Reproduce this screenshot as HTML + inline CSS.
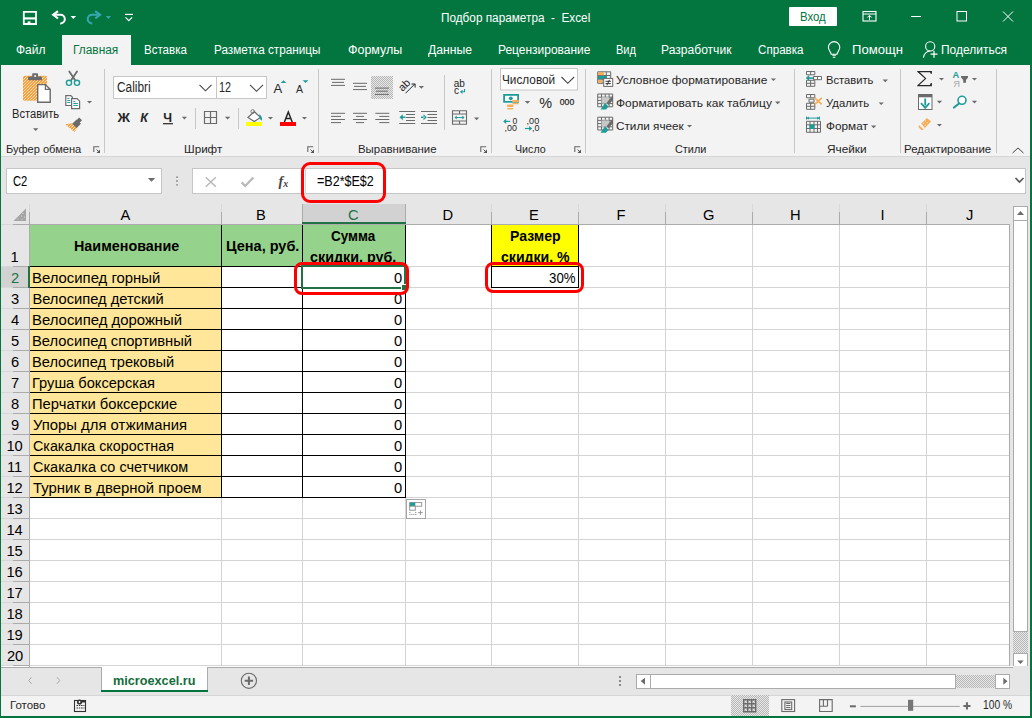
<!DOCTYPE html>
<html><head><meta charset="utf-8"><style>
html,body{margin:0;padding:0;width:1032px;height:718px;overflow:hidden;background:#fff}
body>div,body>svg{position:absolute}
.t{font-family:"Liberation Sans",sans-serif;white-space:pre;transform-origin:0 0}
</style></head><body>
<div style="left:0px;top:0px;width:1032px;height:65px;background:#03753f;"></div>
<svg style="left:0px;top:0px;" width="140" height="30" viewBox="0 0 140 30"><path d="M23.8 11.8h12.2v12.2h-12.2z" fill="none" stroke="#fff" stroke-width="1.8"/><path d="M24 18.4h12" stroke="#fff" stroke-width="2.2"/><rect x="27.6" y="21.4" width="2.9" height="2.5" fill="#fff"/><path d="M53 14.8h7.2a4.3 4.3 0 0 1 0.6 8.6h-0.6" fill="none" stroke="#fff" stroke-width="2"/><path d="M58 11.2l-4.8 3.6 4.8 3.7" fill="none" stroke="#fff" stroke-width="2.2"/><polygon points="70.6,16 76.1,16 73.35,18.9" fill="#fff"/><path d="M99.5 14.8h-7.2a4.3 4.3 0 0 0 -0.6 8.6h0.6" fill="none" stroke="#38a6ae" stroke-width="2"/><path d="M95.2 11.2l4.8 3.6-4.8 3.7" fill="none" stroke="#38a6ae" stroke-width="2.2"/><polygon points="105.8,16 111,16 108.4,19" fill="#38a6ae"/><path d="M125 14.4h8" stroke="#fff" stroke-width="1.2"/><path d="M125.5 17.3l3.3 3.4 3.3-3.4" fill="none" stroke="#fff" stroke-width="1.2"/></svg>
<div class="t" style="left:440.96px;top:12px;font-size:12.5px;line-height:12.5px;color:#fff;transform:scaleX(0.9418);">Подбор параметра  -  Excel</div>
<div style="left:789px;top:7px;width:48px;height:19px;background:#fff;border-radius:1px"></div>
<div class="t" style="left:799.59px;top:11px;font-size:12.5px;line-height:12.5px;color:#03753f;transform:scaleX(0.9112);">Вход</div>
<svg style="left:855px;top:5px;" width="170" height="24" viewBox="0 0 170 24"><rect x="8" y="6.5" width="13" height="9.5" fill="none" stroke="#fff" stroke-width="1.1"/><path d="M8 9h13" stroke="#fff" stroke-width="1"/><path d="M14.5 15v-4.5M12.3 12.5l2.2-2.2 2.2 2.2" fill="none" stroke="#fff" stroke-width="1"/><path d="M56 11.5h10" stroke="#fff" stroke-width="1"/><rect x="102" y="6.5" width="9.5" height="9.5" fill="none" stroke="#fff" stroke-width="1"/><path d="M148 6.5l10 10M158 6.5l-10 10" stroke="#fff" stroke-width="1"/></svg>
<div style="left:62px;top:35px;width:69px;height:30px;background:#f3f3f3;"></div>
<svg style="left:820px;top:38px;" width="130" height="24" viewBox="0 0 130 24"><path d="M11.2 16.3c0-2.2-2.8-3.6-2.8-7a5.7 5.7 0 0 1 11.4 0c0 3.4-2.8 4.8-2.8 7z" fill="none" stroke="#fff" stroke-width="1.1"/><path d="M12.3 17.3h3.6M12.8 19.3h2.6" stroke="#fff" stroke-width="1.1"/><circle cx="110.2" cy="8.4" r="4.6" fill="none" stroke="#fff" stroke-width="1.1"/><path d="M103.4 19.6c0.8-3.8 3.4-6.4 6.8-6.6" fill="none" stroke="#fff" stroke-width="1.1"/><path d="M114 12.7v7M110.5 16.2h7" stroke="#fff" stroke-width="1.2"/></svg>
<div class="t" style="left:15.80px;top:44px;font-size:12.5px;line-height:12.5px;color:#fff;transform:scaleX(0.9593);">Файл</div>
<div class="t" style="left:73.05px;top:44px;font-size:12.5px;line-height:12.5px;color:#03753f;transform:scaleX(0.9518);">Главная</div>
<div class="t" style="left:144.08px;top:44px;font-size:12.5px;line-height:12.5px;color:#fff;transform:scaleX(0.9229);">Вставка</div>
<div class="t" style="left:213.76px;top:44px;font-size:12.5px;line-height:12.5px;color:#fff;transform:scaleX(0.9385);">Разметка страницы</div>
<div class="t" style="left:347.60px;top:44px;font-size:12.5px;line-height:12.5px;color:#fff;transform:scaleX(0.9980);">Формулы</div>
<div class="t" style="left:428.30px;top:44px;font-size:12.5px;line-height:12.5px;color:#fff;transform:scaleX(0.9755);">Данные</div>
<div class="t" style="left:497.94px;top:44px;font-size:12.5px;line-height:12.5px;color:#fff;transform:scaleX(0.9574);">Рецензирование</div>
<div class="t" style="left:615.62px;top:44px;font-size:12.5px;line-height:12.5px;color:#fff;transform:scaleX(0.8826);">Вид</div>
<div class="t" style="left:661.03px;top:44px;font-size:12.5px;line-height:12.5px;color:#fff;transform:scaleX(0.9665);">Разработчик</div>
<div class="t" style="left:758.00px;top:44px;font-size:12.5px;line-height:12.5px;color:#fff;transform:scaleX(0.9290);">Справка</div>
<div class="t" style="left:852.45px;top:44px;font-size:12.5px;line-height:12.5px;color:#fff;transform:scaleX(1.0468);">Помощн</div>
<div class="t" style="left:941.04px;top:44px;font-size:12.5px;line-height:12.5px;color:#fff;transform:scaleX(0.9575);">Поделиться</div>
<div style="left:1px;top:65px;width:1030px;height:92px;background:#f3f3f3;"></div>
<div style="left:1px;top:156px;width:1030px;height:1px;background:#d6d6d6;"></div>
<div style="left:104px;top:69px;width:1px;height:84px;background:#c8c8c8;"></div>
<div style="left:318px;top:69px;width:1px;height:84px;background:#c8c8c8;"></div>
<div style="left:491px;top:69px;width:1px;height:84px;background:#c8c8c8;"></div>
<div style="left:585px;top:69px;width:1px;height:84px;background:#c8c8c8;"></div>
<div style="left:794px;top:69px;width:1px;height:84px;background:#c8c8c8;"></div>
<div style="left:900px;top:69px;width:1px;height:84px;background:#c8c8c8;"></div>
<div style="left:996px;top:69px;width:1px;height:84px;background:#c8c8c8;"></div>
<div class="t" style="left:6.40px;top:144px;font-size:11.5px;line-height:11.5px;color:#262626;transform:scaleX(0.9626);">Буфер обмена</div>
<div class="t" style="left:184.20px;top:144px;font-size:11.5px;line-height:11.5px;color:#262626;transform:scaleX(1.0112);">Шрифт</div>
<div class="t" style="left:357.50px;top:144px;font-size:11.5px;line-height:11.5px;color:#262626;transform:scaleX(0.9916);">Выравнивание</div>
<div class="t" style="left:514.70px;top:144px;font-size:11.5px;line-height:11.5px;color:#262626;transform:scaleX(0.9272);">Число</div>
<div class="t" style="left:674.50px;top:144px;font-size:11.5px;line-height:11.5px;color:#262626;transform:scaleX(0.9448);">Стили</div>
<div class="t" style="left:827.00px;top:144px;font-size:11.5px;line-height:11.5px;color:#262626;transform:scaleX(1.0276);">Ячейки</div>
<div class="t" style="left:904.40px;top:144px;font-size:11.5px;line-height:11.5px;color:#262626;transform:scaleX(0.9953);">Редактирование</div>
<svg style="left:0;top:0" width="1032" height="160" viewBox="0 0 1032 160"><defs><pattern id="dith" width="3" height="3" patternUnits="userSpaceOnUse"><rect width="3" height="3" fill="#f5a043"/><rect x="0" y="0" width="1" height="1" fill="#fde3b5"/><rect x="2" y="1" width="1" height="1" fill="#fbd08e"/><rect x="1" y="2" width="1" height="1" fill="#fde3b5"/></pattern><pattern id="hatch" width="2" height="2" patternUnits="userSpaceOnUse"><rect width="2" height="2" fill="#e8e8e8"/><rect width="1" height="1" fill="#b6b6b6"/><rect x="1" y="1" width="1" height="1" fill="#b6b6b6"/></pattern></defs><rect x="23" y="75.8" width="24" height="25" rx="1.5" fill="url(#dith)"/><rect x="28" y="76.4" width="14" height="3.8" rx="0.8" fill="#6b6b6b"/><rect x="32.2" y="73.2" width="5.8" height="4" rx="0.8" fill="#6b6b6b"/><circle cx="35.1" cy="76" r="1" fill="#fff"/><path d="M37.7 84.6h7.7l4.8 4.8v12.8h-12.5z" fill="#fff" stroke="#6b6b6b" stroke-width="1.4"/><path d="M45.4 84.6v4.8h4.8" fill="none" stroke="#6b6b6b" stroke-width="1.2"/><polygon points="33,128.3 38.4,128.3 35.7,131.0" fill="#6b6b6b"/><path d="M69.3 71.5l5.7 8.5M77 71.5l-5.7 8.5" stroke="#6b6b6b" stroke-width="1.8" stroke-linecap="round"/><circle cx="69" cy="82.8" r="2.6" fill="none" stroke="#1f9b98" stroke-width="1.4"/><circle cx="77" cy="82.8" r="2.6" fill="none" stroke="#1f9b98" stroke-width="1.4"/><path d="M65.8 95.6h5l1.6 1.6v8.3h-6.6z" fill="#fff" stroke="#6b6b6b" stroke-width="1.2"/><path d="M67.3 98.4h2.2M67.3 100.5h3M67.3 102.5h3" stroke="#1f9b98" stroke-width="1"/><path d="M71.6 98.6h5.4l2.6 2.6v7.4h-8z" fill="#fff" stroke="#6b6b6b" stroke-width="1.2"/><path d="M73.3 101.6h2M73.3 103.5h4.6M73.3 105.4h4.6" stroke="#1f9b98" stroke-width="1"/><polygon points="87,101 92,101 89.5,103.5" fill="#6b6b6b"/><path d="M79.2 117.5l2.8 2.8-3.2 3.2-2.8-2.8z" fill="#6b6b6b"/><path d="M76.6 119.5l4.3 4.3-4.6 4.6-4.3-4.3z" fill="#6b6b6b"/><path d="M71.6 123.2l5.4 5.4-2.6 3.3-9.2-7.6z" fill="url(#dith)"/><rect x="113.5" y="76.5" width="103" height="22" fill="#fff" stroke="#c6c6c6"/><rect x="216.5" y="76.5" width="50" height="22" fill="#fff" stroke="#c6c6c6"/><path d="M199.5 84.8l6 6 6-6M250 84.8l6.5 6.5 6.5-6.5" fill="none" stroke="#444" stroke-width="1.1"/><text x="273.5" y="92.8" font-family="Liberation Sans" font-size="13" fill="#262626">A</text><polygon points="280.7,83 286.3,83 283.5,80.2" fill="#1f9b98"/><text x="296" y="92.8" font-family="Liberation Sans" font-size="10.5" fill="#262626">A</text><polygon points="302.7,80.2 308.4,80.2 305.5,83" fill="#1f9b98"/><text x="117.5" y="122" font-family="Liberation Sans" font-weight="bold" font-size="12.5" fill="#262626" textLength="12.5" lengthAdjust="spacingAndGlyphs">Ж</text><text x="140.3" y="122" font-family="Liberation Sans" font-weight="bold" font-style="italic" font-size="12.5" fill="#262626">К</text><text x="163.3" y="122" font-family="Liberation Sans" font-weight="bold" font-size="12.5" fill="#262626">Ч</text><rect x="163" y="123.1" width="10" height="1.2" fill="#262626"/><polygon points="181.8,116.8 187,116.8 184.4,119.39999999999999" fill="#6b6b6b"/><rect x="195" y="108" width="1" height="21" fill="#c8c8c8"/><rect x="238" y="108" width="1" height="21" fill="#c8c8c8"/><path d="M204.5 111.5h12v12h-12zM210.5 111.5v12M204.5 117.5h12" fill="none" stroke="#6b6b6b" stroke-width="1.2"/><polygon points="224.9,116.8 230.3,116.8 227.60000000000002,119.5" fill="#6b6b6b"/><path d="M248 117.4l6.3-5.7 6.1 5.7-6.1 4.1z" fill="#fff" stroke="#6b6b6b" stroke-width="1.25"/><circle cx="252.7" cy="111.5" r="1.8" fill="none" stroke="#6b6b6b" stroke-width="0.9"/><path d="M259 114.2q3.5 1.5 3 6.5l-2-1.5z" fill="#1f9b98"/><rect x="246" y="122" width="16" height="4" fill="#ffff00"/><polygon points="267.9,117 273,117 270.45,119.55000000000001" fill="#6b6b6b"/><path d="M284.4 122l3.9-10 3.9 10M285.8 118.6h5" fill="none" stroke="#262626" stroke-width="1.5"/><rect x="280" y="122" width="16" height="4" fill="#ff0000"/><polygon points="301.9,117 307,117 304.45,119.55000000000001" fill="#6b6b6b"/><path d="M331 79.3h14M332 82.4h12M331 85.4h14" stroke="#6b6b6b" stroke-width="1"/><path d="M353 83.3h14M354 86.4h12M353 89.6h14" stroke="#6b6b6b" stroke-width="1"/><rect x="371" y="76" width="22" height="23" fill="url(#hatch)"/><path d="M375 88.1h14M376 91.2h12M375 94.4h14" stroke="#6b6b6b" stroke-width="1"/><text x="0" y="0" font-family="Liberation Sans" font-size="11" fill="#262626" transform="translate(402.5,92) rotate(-45)">ab</text><path d="M405.6 93.2l9.3-9.3M411.5 84h3.6v3.6" fill="none" stroke="#262626" stroke-width="1"/><polygon points="418.7,86 424,86 421.35,88.65" fill="#6b6b6b"/><path d="M331 113.3h14M331 116.4h10M331 119.5h14M331 122.6h10" stroke="#6b6b6b" stroke-width="1"/><path d="M353 113.3h14M356 116.4h8M353 119.5h14M356 122.6h8" stroke="#6b6b6b" stroke-width="1"/><path d="M375.3 113.3h14M379.3 116.4h10M375.3 119.5h14M379.3 122.6h10" stroke="#6b6b6b" stroke-width="1"/><path d="M399.2 111.5h16M406 114.5h9M406 117.5h9M406 120.5h9M399.2 123.5h16" stroke="#6b6b6b" stroke-width="1"/><path d="M399.5 117.3l3.3-3v6zM402 116.6h3.5v1.5h-3.5z" fill="#1f9b98"/><path d="M421 111.5h16M427.5 114.5h9.5M427.5 117.5h9.5M427.5 120.5h9.5M421 123.5h16" stroke="#6b6b6b" stroke-width="1"/><path d="M426.8 117.3l-3.3-3v6zM421 116.6h3.5v1.5h-3.5z" fill="#1f9b98"/><rect x="444" y="75" width="1" height="55" fill="#c8c8c8"/><text x="453.8" y="86.6" font-family="Liberation Sans" font-size="10" fill="#262626">ab</text><text x="454" y="94" font-family="Liberation Sans" font-size="10" fill="#262626">c</text><path d="M464.5 89v2.8h-3M462.5 90.3l-1.7 1.5 1.7 1.5" fill="none" stroke="#1f9b98" stroke-width="1.1"/><path d="M452.5 110.7h14v13.6h-14zM452.5 114h14M452.5 121h14M459.5 110.7v3.3M459.5 121v3.3" fill="none" stroke="#6b6b6b" stroke-width="1.1"/><path d="M455 117.6h9" stroke="#1f9b98" stroke-width="1"/><path d="M454.5 117.6l2.2-2v4zM464.5 117.6l-2.2-2v4z" fill="#1f9b98"/><polygon points="474,117.6 479.2,117.6 476.6,120.19999999999999" fill="#6b6b6b"/><rect x="500.5" y="68.5" width="77" height="21.5" fill="#fff" stroke="#c6c6c6"/><path d="M561.5 77l6.3 6.3 6.3-6.3" fill="none" stroke="#444" stroke-width="1.1"/><rect x="503.2" y="94" width="15.8" height="8.7" fill="#1f9b98"/><rect x="505" y="95.8" width="12.2" height="5.1" fill="#fff"/><circle cx="510.8" cy="98.3" r="1.9" fill="#1f9b98"/><rect x="512" y="100" width="7" height="2.2" rx="1" fill="#f6ae5a"/><rect x="512.5" y="103" width="6" height="1.2" fill="#f6ae5a"/><rect x="507" y="104.5" width="6.5" height="2.4" rx="1" fill="#f6ae5a"/><rect x="507.2" y="108" width="6" height="1.4" fill="#f6ae5a"/><polygon points="524.8,101 530.2,101 527.5,103.70000000000005" fill="#6b6b6b"/><text x="539.2" y="107.9" font-family="Liberation Sans" font-size="14.5" fill="#262626" textLength="12.8" lengthAdjust="spacingAndGlyphs">%</text><text x="559.8" y="105" font-family="Liberation Sans" font-size="9.8" fill="#262626" textLength="14.4" lengthAdjust="spacingAndGlyphs" stroke="#262626" stroke-width="0.25">000</text><path d="M504 121.4h6" stroke="#1f9b98" stroke-width="1.2"/><path d="M503.2 121.4l3-2.6v5.2z" fill="#1f9b98"/><text x="512.4" y="123.5" font-family="Liberation Sans" font-size="8.6" fill="#262626">0</text><text x="504.6" y="130.9" font-family="Liberation Sans" font-size="8.6" fill="#262626" textLength="12.4" lengthAdjust="spacingAndGlyphs">,00</text><text x="526.6" y="123.5" font-family="Liberation Sans" font-size="8.6" fill="#262626" textLength="12.6" lengthAdjust="spacingAndGlyphs">,00</text><text x="532" y="130.9" font-family="Liberation Sans" font-size="8.6" fill="#262626" textLength="7.4" lengthAdjust="spacingAndGlyphs">,0</text><path d="M525 128.5h6" stroke="#1f9b98" stroke-width="1.2"/><path d="M532.2 128.5l-3-2.6v5.2z" fill="#1f9b98"/><path d="M597.7 71.8h13v11.5h-13zM597.7 75.5h13M597.7 79.3h13M602 71.8v11.5M606.3 71.8v11.5" fill="none" stroke="#6b6b6b" stroke-width="1"/><rect x="598" y="72.2" width="6" height="3" fill="#f6ae5a"/><rect x="598" y="76" width="9" height="3" fill="#1f9b98"/><rect x="598" y="79.8" width="4" height="3" fill="#f6ae5a"/><rect x="603.7" y="78.4" width="9" height="8" fill="#fff" stroke="#6b6b6b" stroke-width="1"/><path d="M605.5 81.3h5.4M605.5 83.6h5.4M609.5 79.8l-2.6 5.5" stroke="#262626" stroke-width="0.9"/><path d="M597.7 94h15v12.8h-15zM597.7 97.2h15M597.7 100.4h15M597.7 103.6h15M601.5 94v12.8M605.3 94v12.8M609.1 94v12.8" fill="none" stroke="#6b6b6b" stroke-width="1"/><rect x="601.5" y="97.2" width="7.6" height="6.4" fill="#c8c8c8"/><path d="M613 95l-6.5 8 2 2 4.5-5z" fill="#6b6b6b"/><path d="M605 103l3.5 3.5-2.5 3h-5.5z" fill="#1f9b98"/><path d="M597.7 117.2h15v12.8h-15zM597.7 120.4h15M597.7 123.60000000000001h15M597.7 126.8h15M601.5 117.2v12.8M605.3 117.2v12.8M609.1 117.2v12.8" fill="none" stroke="#6b6b6b" stroke-width="1"/><rect x="601.5" y="120.4" width="7.6" height="6.4" fill="#c8c8c8"/><path d="M613 118.2l-6.5 8 2 2 4.5-5z" fill="#6b6b6b"/><path d="M605 126.2l3.5 3.5-2.5 3h-5.5z" fill="#1f9b98"/><polygon points="770.8,78.5 776,78.5 773.4,81.10000000000002" fill="#6b6b6b"/><polygon points="775,101.5 780.4,101.5 777.7,104.19999999999999" fill="#6b6b6b"/><polygon points="687,125 692,125 689.5,127.5" fill="#6b6b6b"/><path d="M806.5 71.5h8.3v3.3h-8.3zM810.6 71.5v3.3M806.5 80.3h8.3v6h-8.3zM806.5 83.3h8.3M810.6 80.3v6" fill="none" stroke="#6b6b6b" stroke-width="1"/><path d="M813.5 76.5h8v3.2h-8zM817.5 76.5v3.2" fill="#fff" stroke="#6b6b6b" stroke-width="1"/><path d="M807.5 78.1h5.5" stroke="#1f9b98" stroke-width="1.6"/><path d="M805.8 78.1l3.4-3v6z" fill="#1f9b98"/><path d="M806.5 94.5h8.3v3.3h-8.3zM810.6 94.5v3.3M806.5 103.3h8.3v6h-8.3zM806.5 106.3h8.3M810.6 103.3v6M809 99.2h5v3h-5z" fill="none" stroke="#6b6b6b" stroke-width="1"/><path d="M814.7 97.8l7 6.6M821.7 97.8l-7 6.6" stroke="#f6ae5a" stroke-width="1.8"/><path d="M806.5 118.1h13M806.5 116.6v3M819.5 116.6v3" stroke="#1f9b98" stroke-width="1"/><path d="M806.8 118.1l2-1.6v3.2zM819.2 118.1l-2-1.6v3.2z" fill="#1f9b98"/><path d="M806.5 121.3h14v11h-14zM806.5 124.8h14M806.5 128.5h14M810 121.3v11M814 121.3v11M817.5 121.3v11" fill="none" stroke="#6b6b6b" stroke-width="1"/><rect x="809.5" y="124.5" width="5" height="4.5" fill="#1f9b98"/><polygon points="882.6,79.5 888,79.5 885.3,82.19999999999999" fill="#6b6b6b"/><polygon points="878.6,102.5 883.8,102.5 881.2,105.09999999999997" fill="#6b6b6b"/><polygon points="871,125.5 876.3,125.5 873.65,128.14999999999998" fill="#6b6b6b"/><path d="M917.2 71h14.7v2.8h-1.2l-0.6-1.5h-10.3l6.6 6.2-7 6.4h10.6l0.7-1.9h1.2v3.3h-14.7v-0.9l7.6-6.9-7.6-6.7z" fill="#262626"/><polygon points="939,77.9 944,77.9 941.5,80.4" fill="#6b6b6b"/><text x="952.6" y="77.9" font-family="Liberation Sans" font-weight="bold" font-size="9.3" fill="#1f9b98">A</text><text x="953.3" y="86.8" font-family="Liberation Sans" font-size="9.3" fill="#a8a8a8">Я</text><path d="M961.1 76h6.9v1.6l-2 2.4v2.8h-2.8v-2.8l-2.1-2.4z" fill="#6b6b6b"/><polygon points="971.9,77.9 977,77.9 974.45,80.45000000000002" fill="#6b6b6b"/><rect x="918.5" y="94.5" width="13.5" height="15" fill="#fff" stroke="#6b6b6b" stroke-width="1"/><rect x="918.5" y="94.5" width="13.5" height="2.8" fill="#6b6b6b"/><path d="M925.2 98.5v7" stroke="#1f9b98" stroke-width="1.8"/><path d="M921 103.2l4.2 4.6 4.2-4.6" fill="none" stroke="#1f9b98" stroke-width="1.8"/><polygon points="936.9,100.8 942.1,100.8 939.5,103.40000000000002" fill="#6b6b6b"/><circle cx="962" cy="100.3" r="4" fill="#fff" stroke="#1f9b98" stroke-width="1.6"/><path d="M959 103.5l-5 4" stroke="#1f9b98" stroke-width="2.2" stroke-linecap="round"/><polygon points="971.9,100.8 977.1,100.8 974.5,103.40000000000002" fill="#6b6b6b"/><path d="M921.2 123.5l5.8-5.6 4 3.5-6.1 6.5z" fill="#f6ae5a"/><path d="M919 125.1l4.9 4.7-2.5 0.3-2.9-2.8z" fill="#f6ae5a"/><circle cx="925.5" cy="121" r="0.6" fill="#fde7c0"/><circle cx="923.6" cy="123.3" r="0.6" fill="#fde7c0"/><circle cx="927.3" cy="122.8" r="0.6" fill="#fde7c0"/><circle cx="925.4" cy="125" r="0.6" fill="#fde7c0"/><polygon points="936.9,124 942,124 939.45,126.55000000000001" fill="#6b6b6b"/><path d="M93.8 152v-5.2h5.4" fill="none" stroke="#666" stroke-width="1.1"/><path d="M96.5 149.5l3 3" stroke="#555" stroke-width="1"/><path d="M96.5 153h3.5v-3.5z" fill="#555"/><path d="M307.8 152v-5.2h5.4" fill="none" stroke="#666" stroke-width="1.1"/><path d="M310.5 149.5l3 3" stroke="#555" stroke-width="1"/><path d="M310.5 153h3.5v-3.5z" fill="#555"/><path d="M480.8 152v-5.2h5.4" fill="none" stroke="#666" stroke-width="1.1"/><path d="M483.5 149.5l3 3" stroke="#555" stroke-width="1"/><path d="M483.5 153h3.5v-3.5z" fill="#555"/><path d="M574.8 152v-5.2h5.4" fill="none" stroke="#666" stroke-width="1.1"/><path d="M577.5 149.5l3 3" stroke="#555" stroke-width="1"/><path d="M577.5 153h3.5v-3.5z" fill="#555"/><path d="M1012.5 153l5.5-5 5.5 5" fill="none" stroke="#444" stroke-width="1"/></svg>
<div class="t" style="left:11.80px;top:107.6px;font-size:12px;line-height:12px;color:#262626;transform:scaleX(0.9266);">Вставить</div>
<div class="t" style="left:116.50px;top:80px;font-size:14px;line-height:14px;color:#262626;transform:scaleX(0.8467);">Calibri</div>
<div class="t" style="left:218.83px;top:80.2px;font-size:14px;line-height:14px;color:#262626;transform:scaleX(0.7710);">12</div>
<div class="t" style="left:502.09px;top:73px;font-size:13px;line-height:13px;color:#262626;transform:scaleX(0.9063);">Числовой</div>
<div class="t" style="left:616.20px;top:75.3px;font-size:11.8px;line-height:11.8px;color:#262626;transform:scaleX(1.0085);">Условное форматирование</div>
<div class="t" style="left:616.00px;top:98px;font-size:11.8px;line-height:11.8px;color:#262626;transform:scaleX(1.0157);">Форматировать как таблицу</div>
<div class="t" style="left:616.00px;top:121px;font-size:11.8px;line-height:11.8px;color:#262626;transform:scaleX(0.9939);">Стили ячеек</div>
<div class="t" style="left:825.60px;top:75px;font-size:11.8px;line-height:11.8px;color:#262626;transform:scaleX(0.9467);">Вставить</div>
<div class="t" style="left:825.60px;top:98px;font-size:11.8px;line-height:11.8px;color:#262626;transform:scaleX(0.9578);">Удалить</div>
<div class="t" style="left:825.60px;top:121px;font-size:11.8px;line-height:11.8px;color:#262626;transform:scaleX(0.9976);">Формат</div>
<div style="left:1px;top:157px;width:1030px;height:47px;background:#e6e6e6;"></div>
<div style="left:6px;top:168px;width:156px;height:26px;background:#fff;border:1px solid #c6c6c6;box-sizing:border-box;"></div>
<div class="t" style="left:13.40px;top:174px;font-size:14px;line-height:14px;color:#000;transform:scaleX(0.8006);">C2</div>
<div style="left:192px;top:168px;width:834px;height:26px;background:#fff;border:1px solid #c6c6c6;box-sizing:border-box;"></div>
<div class="t" style="left:317.00px;top:174px;font-size:14px;line-height:14px;color:#000;transform:scaleX(0.8954);">=B2*$E$2</div>
<svg style="left:140px;top:160px;" width="900" height="40" viewBox="0 0 900 40"><polygon points="7.9,17.9 15.2,17.9 11.55,21.7" fill="#6b6b6b"/><circle cx="37" cy="17.2" r="0.9" fill="#8a8a8a"/><circle cx="37" cy="21" r="0.9" fill="#8a8a8a"/><circle cx="37" cy="24.8" r="0.9" fill="#8a8a8a"/><path d="M65.8 17.3l10 9.4M75.8 17.3l-10 9.4" stroke="#b8b8b8" stroke-width="1.5"/><path d="M101.6 22.4l3.6 3.6 8.2-8.6" fill="none" stroke="#b8b8b8" stroke-width="2.2"/><text x="138.5" y="26.3" font-family="Liberation Serif" font-style="italic" font-weight="bold" font-size="14" fill="#444">f</text><text x="143.2" y="26.5" font-family="Liberation Serif" font-style="italic" font-weight="bold" font-size="10" fill="#444">x</text><path d="M875.5 18l4 4 4-4" fill="none" stroke="#555" stroke-width="1.6"/></svg>
<div style="left:1px;top:204px;width:1012px;height:20px;background:#e6e6e6;"></div>
<div style="left:1px;top:224px;width:1012px;height:1px;background:#ababab;"></div>
<div style="left:1px;top:225px;width:1012px;height:441px;background:#fff;"></div>
<div style="left:1px;top:204px;width:28px;height:462px;background:#e6e6e6;"></div>
<div style="left:29px;top:204px;width:1px;height:8px;background:#d8d8d8;"></div>
<div style="left:29px;top:212px;width:1px;height:454px;background:#ababab;"></div>
<div style="left:1px;top:224px;width:12px;height:1px;background:#d8d8d8;"></div>
<div style="left:13px;top:224px;width:16px;height:1px;background:#ababab;"></div>
<div style="left:30px;top:266px;width:980px;height:1px;background:#d4d4d4;"></div>
<div style="left:30px;top:287px;width:980px;height:1px;background:#d4d4d4;"></div>
<div style="left:30px;top:308px;width:980px;height:1px;background:#d4d4d4;"></div>
<div style="left:30px;top:329px;width:980px;height:1px;background:#d4d4d4;"></div>
<div style="left:30px;top:350px;width:980px;height:1px;background:#d4d4d4;"></div>
<div style="left:30px;top:371px;width:980px;height:1px;background:#d4d4d4;"></div>
<div style="left:30px;top:392px;width:980px;height:1px;background:#d4d4d4;"></div>
<div style="left:30px;top:413px;width:980px;height:1px;background:#d4d4d4;"></div>
<div style="left:30px;top:434px;width:980px;height:1px;background:#d4d4d4;"></div>
<div style="left:30px;top:455px;width:980px;height:1px;background:#d4d4d4;"></div>
<div style="left:30px;top:476px;width:980px;height:1px;background:#d4d4d4;"></div>
<div style="left:30px;top:497px;width:980px;height:1px;background:#d4d4d4;"></div>
<div style="left:30px;top:518px;width:980px;height:1px;background:#d4d4d4;"></div>
<div style="left:30px;top:539px;width:980px;height:1px;background:#d4d4d4;"></div>
<div style="left:30px;top:560px;width:980px;height:1px;background:#d4d4d4;"></div>
<div style="left:30px;top:581px;width:980px;height:1px;background:#d4d4d4;"></div>
<div style="left:30px;top:602px;width:980px;height:1px;background:#d4d4d4;"></div>
<div style="left:30px;top:623px;width:980px;height:1px;background:#d4d4d4;"></div>
<div style="left:30px;top:644px;width:980px;height:1px;background:#d4d4d4;"></div>
<div style="left:30px;top:665px;width:980px;height:1px;background:#d4d4d4;"></div>
<div style="left:221px;top:225px;width:1px;height:441px;background:#d4d4d4;"></div>
<div style="left:302px;top:225px;width:1px;height:441px;background:#d4d4d4;"></div>
<div style="left:405px;top:225px;width:1px;height:441px;background:#d4d4d4;"></div>
<div style="left:491px;top:225px;width:1px;height:441px;background:#d4d4d4;"></div>
<div style="left:578px;top:225px;width:1px;height:441px;background:#d4d4d4;"></div>
<div style="left:665px;top:225px;width:1px;height:441px;background:#d4d4d4;"></div>
<div style="left:752px;top:225px;width:1px;height:441px;background:#d4d4d4;"></div>
<div style="left:839px;top:225px;width:1px;height:441px;background:#d4d4d4;"></div>
<div style="left:926px;top:225px;width:1px;height:441px;background:#d4d4d4;"></div>
<div style="left:221px;top:204px;width:1px;height:8px;background:#d8d8d8;"></div>
<div style="left:221px;top:212px;width:1px;height:12px;background:#ababab;"></div>
<div style="left:302px;top:204px;width:1px;height:8px;background:#d8d8d8;"></div>
<div style="left:302px;top:212px;width:1px;height:12px;background:#ababab;"></div>
<div style="left:405px;top:204px;width:1px;height:8px;background:#d8d8d8;"></div>
<div style="left:405px;top:212px;width:1px;height:12px;background:#ababab;"></div>
<div style="left:491px;top:204px;width:1px;height:8px;background:#d8d8d8;"></div>
<div style="left:491px;top:212px;width:1px;height:12px;background:#ababab;"></div>
<div style="left:578px;top:204px;width:1px;height:8px;background:#d8d8d8;"></div>
<div style="left:578px;top:212px;width:1px;height:12px;background:#ababab;"></div>
<div style="left:665px;top:204px;width:1px;height:8px;background:#d8d8d8;"></div>
<div style="left:665px;top:212px;width:1px;height:12px;background:#ababab;"></div>
<div style="left:752px;top:204px;width:1px;height:8px;background:#d8d8d8;"></div>
<div style="left:752px;top:212px;width:1px;height:12px;background:#ababab;"></div>
<div style="left:839px;top:204px;width:1px;height:8px;background:#d8d8d8;"></div>
<div style="left:839px;top:212px;width:1px;height:12px;background:#ababab;"></div>
<div style="left:926px;top:204px;width:1px;height:8px;background:#d8d8d8;"></div>
<div style="left:926px;top:212px;width:1px;height:12px;background:#ababab;"></div>
<div style="left:1px;top:266px;width:12px;height:1px;background:#d8d8d8;"></div>
<div style="left:13px;top:266px;width:16px;height:1px;background:#ababab;"></div>
<div style="left:1px;top:287px;width:12px;height:1px;background:#d8d8d8;"></div>
<div style="left:13px;top:287px;width:16px;height:1px;background:#ababab;"></div>
<div style="left:1px;top:308px;width:12px;height:1px;background:#d8d8d8;"></div>
<div style="left:13px;top:308px;width:16px;height:1px;background:#ababab;"></div>
<div style="left:1px;top:329px;width:12px;height:1px;background:#d8d8d8;"></div>
<div style="left:13px;top:329px;width:16px;height:1px;background:#ababab;"></div>
<div style="left:1px;top:350px;width:12px;height:1px;background:#d8d8d8;"></div>
<div style="left:13px;top:350px;width:16px;height:1px;background:#ababab;"></div>
<div style="left:1px;top:371px;width:12px;height:1px;background:#d8d8d8;"></div>
<div style="left:13px;top:371px;width:16px;height:1px;background:#ababab;"></div>
<div style="left:1px;top:392px;width:12px;height:1px;background:#d8d8d8;"></div>
<div style="left:13px;top:392px;width:16px;height:1px;background:#ababab;"></div>
<div style="left:1px;top:413px;width:12px;height:1px;background:#d8d8d8;"></div>
<div style="left:13px;top:413px;width:16px;height:1px;background:#ababab;"></div>
<div style="left:1px;top:434px;width:12px;height:1px;background:#d8d8d8;"></div>
<div style="left:13px;top:434px;width:16px;height:1px;background:#ababab;"></div>
<div style="left:1px;top:455px;width:12px;height:1px;background:#d8d8d8;"></div>
<div style="left:13px;top:455px;width:16px;height:1px;background:#ababab;"></div>
<div style="left:1px;top:476px;width:12px;height:1px;background:#d8d8d8;"></div>
<div style="left:13px;top:476px;width:16px;height:1px;background:#ababab;"></div>
<div style="left:1px;top:497px;width:12px;height:1px;background:#d8d8d8;"></div>
<div style="left:13px;top:497px;width:16px;height:1px;background:#ababab;"></div>
<div style="left:1px;top:518px;width:12px;height:1px;background:#d8d8d8;"></div>
<div style="left:13px;top:518px;width:16px;height:1px;background:#ababab;"></div>
<div style="left:1px;top:539px;width:12px;height:1px;background:#d8d8d8;"></div>
<div style="left:13px;top:539px;width:16px;height:1px;background:#ababab;"></div>
<div style="left:1px;top:560px;width:12px;height:1px;background:#d8d8d8;"></div>
<div style="left:13px;top:560px;width:16px;height:1px;background:#ababab;"></div>
<div style="left:1px;top:581px;width:12px;height:1px;background:#d8d8d8;"></div>
<div style="left:13px;top:581px;width:16px;height:1px;background:#ababab;"></div>
<div style="left:1px;top:602px;width:12px;height:1px;background:#d8d8d8;"></div>
<div style="left:13px;top:602px;width:16px;height:1px;background:#ababab;"></div>
<div style="left:1px;top:623px;width:12px;height:1px;background:#d8d8d8;"></div>
<div style="left:13px;top:623px;width:16px;height:1px;background:#ababab;"></div>
<div style="left:1px;top:644px;width:12px;height:1px;background:#d8d8d8;"></div>
<div style="left:13px;top:644px;width:16px;height:1px;background:#ababab;"></div>
<div style="left:1px;top:665px;width:12px;height:1px;background:#d8d8d8;"></div>
<div style="left:13px;top:665px;width:16px;height:1px;background:#ababab;"></div>
<svg style="left:13px;top:208px;" width="14" height="14" viewBox="0 0 14 14"><polygon points="13,0.5 13,13 0.5,13" fill="#a4a4a4"/><circle cx="10" cy="5.5" r="0.6" fill="#e0e0e0"/><circle cx="8.5" cy="8" r="0.6" fill="#e0e0e0"/><circle cx="11.5" cy="9" r="0.6" fill="#e0e0e0"/><circle cx="5" cy="11" r="0.6" fill="#e0e0e0"/><circle cx="9" cy="11.5" r="0.6" fill="#e0e0e0"/></svg>
<div style="left:30px;top:225px;width:191px;height:41px;background:#95d28b;"></div>
<div style="left:222px;top:225px;width:80px;height:41px;background:#95d28b;"></div>
<div style="left:303px;top:225px;width:102px;height:41px;background:#95d28b;"></div>
<div style="left:492px;top:225px;width:86px;height:41px;background:#ffff00;"></div>
<div style="left:30px;top:267px;width:191px;height:20px;background:#ffe699;"></div>
<div style="left:30px;top:288px;width:191px;height:20px;background:#ffe699;"></div>
<div style="left:30px;top:309px;width:191px;height:20px;background:#ffe699;"></div>
<div style="left:30px;top:330px;width:191px;height:20px;background:#ffe699;"></div>
<div style="left:30px;top:351px;width:191px;height:20px;background:#ffe699;"></div>
<div style="left:30px;top:372px;width:191px;height:20px;background:#ffe699;"></div>
<div style="left:30px;top:393px;width:191px;height:20px;background:#ffe699;"></div>
<div style="left:30px;top:414px;width:191px;height:20px;background:#ffe699;"></div>
<div style="left:30px;top:435px;width:191px;height:20px;background:#ffe699;"></div>
<div style="left:30px;top:456px;width:191px;height:20px;background:#ffe699;"></div>
<div style="left:30px;top:477px;width:191px;height:20px;background:#ffe699;"></div>
<div style="left:30px;top:266px;width:376px;height:1px;background:#000;"></div>
<div style="left:30px;top:287px;width:376px;height:1px;background:#000;"></div>
<div style="left:30px;top:308px;width:376px;height:1px;background:#000;"></div>
<div style="left:30px;top:329px;width:376px;height:1px;background:#000;"></div>
<div style="left:30px;top:350px;width:376px;height:1px;background:#000;"></div>
<div style="left:30px;top:371px;width:376px;height:1px;background:#000;"></div>
<div style="left:30px;top:392px;width:376px;height:1px;background:#000;"></div>
<div style="left:30px;top:413px;width:376px;height:1px;background:#000;"></div>
<div style="left:30px;top:434px;width:376px;height:1px;background:#000;"></div>
<div style="left:30px;top:455px;width:376px;height:1px;background:#000;"></div>
<div style="left:30px;top:476px;width:376px;height:1px;background:#000;"></div>
<div style="left:30px;top:497px;width:376px;height:1px;background:#000;"></div>
<div style="left:221px;top:225px;width:1px;height:273px;background:#000;"></div>
<div style="left:302px;top:225px;width:1px;height:273px;background:#000;"></div>
<div style="left:405px;top:225px;width:1px;height:273px;background:#000;"></div>
<div style="left:30px;top:497px;width:376px;height:1px;background:#000;"></div>
<div style="left:491px;top:266px;width:88px;height:22px;background:transparent;border:1px solid #000;box-sizing:border-box;"></div>
<div style="left:491px;top:225px;width:1px;height:42px;background:#000;"></div>
<div style="left:578px;top:225px;width:1px;height:42px;background:#000;"></div>
<div style="left:303px;top:204px;width:102px;height:20px;background:#d2d2d2;"></div>
<div style="left:302px;top:204px;width:1px;height:20px;background:#ababab;"></div>
<div style="left:405px;top:204px;width:1px;height:20px;background:#ababab;"></div>
<div style="left:302px;top:222px;width:104px;height:2px;background:#217346;"></div>
<div style="left:1px;top:267px;width:28px;height:20px;background:#d2d2d2;"></div>
<div style="left:28px;top:266px;width:2px;height:22px;background:#217346;"></div>
<div style="left:301px;top:265px;width:105px;height:24px;background:transparent;border:2px solid #217346;box-sizing:border-box;"></div>
<div style="left:401px;top:284px;width:6px;height:6px;background:#fff;"></div>
<div style="left:402px;top:285px;width:5px;height:5px;background:#217346;"></div>
<svg style="left:406px;top:499px;" width="20" height="20" viewBox="0 0 20 20"><rect x="0.5" y="0.5" width="19" height="19" fill="#fff" stroke="#a6a6a6" stroke-width="1"/><rect x="3.7" y="3.6" width="12" height="3.6" fill="#fff" stroke="#8c8c8c" stroke-width="0.9"/><rect x="3.7" y="3.6" width="5.6" height="3.6" fill="#1f9b98"/><rect x="3.7" y="7.2" width="5.6" height="4" fill="#fff" stroke="#8c8c8c" stroke-width="0.9"/><path d="M3.2 13.4h1.3M9 13.4h1.3M3.2 15.4h1.3M5.2 15.4h1.3M7.2 15.4h1.3M9.2 15.4h1.3" stroke="#999" stroke-width="1"/><path d="M14.5 11.4v4.6M12.2 13.6h4.6" stroke="#8c8c8c" stroke-width="0.9"/></svg>
<div class="t" style="left:120.50px;top:208px;font-size:14.7px;line-height:14.7px;color:#000;">A</div>
<div class="t" style="left:256.00px;top:208px;font-size:14.7px;line-height:14.7px;color:#000;">B</div>
<div class="t" style="left:348.00px;top:208px;font-size:14.7px;line-height:14.7px;color:#217346;">C</div>
<div class="t" style="left:442.50px;top:208px;font-size:14.7px;line-height:14.7px;color:#000;">D</div>
<div class="t" style="left:529.00px;top:208px;font-size:14.7px;line-height:14.7px;color:#000;">E</div>
<div class="t" style="left:616.50px;top:208px;font-size:14.7px;line-height:14.7px;color:#000;">F</div>
<div class="t" style="left:703.00px;top:208px;font-size:14.7px;line-height:14.7px;color:#000;">G</div>
<div class="t" style="left:790.00px;top:208px;font-size:14.7px;line-height:14.7px;color:#000;">H</div>
<div class="t" style="left:880.50px;top:208px;font-size:14.7px;line-height:14.7px;color:#000;">I</div>
<div class="t" style="left:966.00px;top:208px;font-size:14.7px;line-height:14.7px;color:#000;">J</div>
<div class="t" style="left:10.50px;top:250px;font-size:14.7px;line-height:14.7px;color:#000;">1</div>
<div class="t" style="left:11.00px;top:271px;font-size:14.7px;line-height:14.7px;color:#217346;">2</div>
<div class="t" style="left:11.00px;top:292px;font-size:14.7px;line-height:14.7px;color:#000;">3</div>
<div class="t" style="left:11.00px;top:313px;font-size:14.7px;line-height:14.7px;color:#000;">4</div>
<div class="t" style="left:11.00px;top:334px;font-size:14.7px;line-height:14.7px;color:#000;">5</div>
<div class="t" style="left:11.00px;top:355px;font-size:14.7px;line-height:14.7px;color:#000;">6</div>
<div class="t" style="left:11.00px;top:376px;font-size:14.7px;line-height:14.7px;color:#000;">7</div>
<div class="t" style="left:11.00px;top:397px;font-size:14.7px;line-height:14.7px;color:#000;">8</div>
<div class="t" style="left:11.00px;top:418px;font-size:14.7px;line-height:14.7px;color:#000;">9</div>
<div class="t" style="left:6.42px;top:439px;font-size:14.7px;line-height:14.7px;color:#000;">10</div>
<div class="t" style="left:6.96px;top:460px;font-size:14.7px;line-height:14.7px;color:#000;">11</div>
<div class="t" style="left:6.42px;top:481px;font-size:14.7px;line-height:14.7px;color:#000;">12</div>
<div class="t" style="left:6.42px;top:502px;font-size:14.7px;line-height:14.7px;color:#000;">13</div>
<div class="t" style="left:6.42px;top:523px;font-size:14.7px;line-height:14.7px;color:#000;">14</div>
<div class="t" style="left:6.42px;top:544px;font-size:14.7px;line-height:14.7px;color:#000;">15</div>
<div class="t" style="left:6.42px;top:565px;font-size:14.7px;line-height:14.7px;color:#000;">16</div>
<div class="t" style="left:6.42px;top:586px;font-size:14.7px;line-height:14.7px;color:#000;">17</div>
<div class="t" style="left:6.42px;top:607px;font-size:14.7px;line-height:14.7px;color:#000;">18</div>
<div class="t" style="left:6.42px;top:628px;font-size:14.7px;line-height:14.7px;color:#000;">19</div>
<div class="t" style="left:6.92px;top:649px;font-size:14.7px;line-height:14.7px;color:#000;">20</div>
<div class="t" style="left:32.39px;top:271px;font-size:14.7px;line-height:14.7px;color:#000;transform:scaleX(1.0134);">Велосипед горный</div>
<div class="t" style="left:394.00px;top:271px;font-size:14.7px;line-height:14.7px;color:#000;">0</div>
<div class="t" style="left:32.40px;top:292px;font-size:14.7px;line-height:14.7px;color:#000;">Велосипед детский</div>
<div class="t" style="left:394.00px;top:292px;font-size:14.7px;line-height:14.7px;color:#000;">0</div>
<div class="t" style="left:32.39px;top:313px;font-size:14.7px;line-height:14.7px;color:#000;transform:scaleX(1.0144);">Велосипед дорожный</div>
<div class="t" style="left:394.00px;top:313px;font-size:14.7px;line-height:14.7px;color:#000;">0</div>
<div class="t" style="left:32.39px;top:334px;font-size:14.7px;line-height:14.7px;color:#000;transform:scaleX(1.0051);">Велосипед спортивный</div>
<div class="t" style="left:394.00px;top:334px;font-size:14.7px;line-height:14.7px;color:#000;">0</div>
<div class="t" style="left:32.40px;top:355px;font-size:14.7px;line-height:14.7px;color:#000;transform:scaleX(0.9960);">Велосипед трековый</div>
<div class="t" style="left:394.00px;top:355px;font-size:14.7px;line-height:14.7px;color:#000;">0</div>
<div class="t" style="left:32.40px;top:376px;font-size:14.7px;line-height:14.7px;color:#000;transform:scaleX(0.9957);">Груша боксерская</div>
<div class="t" style="left:394.00px;top:376px;font-size:14.7px;line-height:14.7px;color:#000;">0</div>
<div class="t" style="left:32.40px;top:397px;font-size:14.7px;line-height:14.7px;color:#000;transform:scaleX(1.0047);">Перчатки боксерские</div>
<div class="t" style="left:394.00px;top:397px;font-size:14.7px;line-height:14.7px;color:#000;">0</div>
<div class="t" style="left:33.40px;top:418px;font-size:14.7px;line-height:14.7px;color:#000;transform:scaleX(1.0103);">Упоры для отжимания</div>
<div class="t" style="left:394.00px;top:418px;font-size:14.7px;line-height:14.7px;color:#000;">0</div>
<div class="t" style="left:33.40px;top:439px;font-size:14.7px;line-height:14.7px;color:#000;transform:scaleX(0.9736);">Скакалка скоростная</div>
<div class="t" style="left:394.00px;top:439px;font-size:14.7px;line-height:14.7px;color:#000;">0</div>
<div class="t" style="left:33.40px;top:460px;font-size:14.7px;line-height:14.7px;color:#000;transform:scaleX(0.9846);">Скакалка со счетчиком</div>
<div class="t" style="left:394.00px;top:460px;font-size:14.7px;line-height:14.7px;color:#000;">0</div>
<div class="t" style="left:33.40px;top:481px;font-size:14.7px;line-height:14.7px;color:#000;transform:scaleX(1.0159);">Турник в дверной проем</div>
<div class="t" style="left:394.00px;top:481px;font-size:14.7px;line-height:14.7px;color:#000;">0</div>
<div class="t" style="left:73.60px;top:239px;font-size:14.7px;line-height:14.7px;color:#000;font-weight:bold;transform:scaleX(0.9769);">Наименование</div>
<div class="t" style="left:225.50px;top:239px;font-size:14.7px;line-height:14.7px;color:#000;font-weight:bold;transform:scaleX(0.9866);">Цена, руб.</div>
<div class="t" style="left:330.50px;top:229px;font-size:14.7px;line-height:14.7px;color:#000;font-weight:bold;transform:scaleX(0.9182);">Сумма</div>
<div class="t" style="left:310.20px;top:249.5px;font-size:14.7px;line-height:14.7px;color:#000;font-weight:bold;transform:scaleX(0.9748);clip-path:inset(-20px -20px -0.8px -20px);">скидки, руб.</div>
<div class="t" style="left:510.00px;top:229px;font-size:14.7px;line-height:14.7px;color:#000;font-weight:bold;transform:scaleX(0.9581);">Размер</div>
<div class="t" style="left:500.90px;top:249.5px;font-size:14.7px;line-height:14.7px;color:#000;font-weight:bold;transform:scaleX(0.9606);clip-path:inset(-20px -20px -0.8px -20px);">скидки, %</div>
<div class="t" style="left:549.30px;top:271px;font-size:14.7px;line-height:14.7px;color:#000;transform:scaleX(0.9033);">30%</div>
<div style="left:1010px;top:204px;width:20px;height:463px;background:#e6e6e6;"></div>
<div style="left:1009px;top:225px;width:1px;height:442px;background:#ababab;"></div>
<div style="left:1013px;top:206px;width:15px;height:15px;background:#fff;border:1px solid #ababab;box-sizing:border-box;"></div>
<div style="left:1013px;top:220px;width:15px;height:412px;background:#fff;border:1px solid #ababab;box-sizing:border-box;"></div>
<div style="left:1013px;top:632px;width:15px;height:21px;background:repeating-conic-gradient(#b6b6b6 0 25%, #e8e8e8 0 50%) 0 0/2px 2px;"></div>
<div style="left:1013px;top:653px;width:15px;height:15px;background:#fff;border:1px solid #ababab;box-sizing:border-box;"></div>
<svg style="left:1013px;top:204px;" width="16" height="464" viewBox="0 0 16 464"><polygon points="4,11 11,11 7.5,7" fill="#6b6b6b"/><polygon points="4.3,456.5 10.7,456.5 7.5,460" fill="#6b6b6b"/></svg>
<div style="left:1px;top:666px;width:1029px;height:29px;background:#e6e6e6;"></div>
<div style="left:1px;top:666px;width:1012px;height:1px;background:#fff;"></div>
<div style="left:1px;top:667px;width:1012px;height:1px;background:#ababab;"></div>
<div style="left:29px;top:666px;width:1px;height:1px;background:#ababab;"></div>
<div style="left:102px;top:667px;width:106px;height:25px;background:#fff;"></div>
<div style="left:101px;top:667px;width:1px;height:25px;background:#ababab;"></div>
<div style="left:207px;top:667px;width:1px;height:25px;background:#ababab;"></div>
<div style="left:101px;top:690px;width:107px;height:2px;background:#03753f;"></div>
<div class="t" style="left:113.40px;top:673.6px;font-size:13px;line-height:13px;color:#156c3b;font-weight:bold;transform:scaleX(0.9751);">microexcel.ru</div>
<svg style="left:0px;top:660px;" width="300" height="36" viewBox="0 0 300 36"><path d="M31.5 17.2l-2.8 3.3 2.8 3.3" fill="none" stroke="#a8a8a8" stroke-width="1"/><path d="M57 17.2l2.8 3.3-2.8 3.3" fill="none" stroke="#a8a8a8" stroke-width="1"/><circle cx="248.9" cy="20.8" r="7.6" fill="none" stroke="#6b6b6b" stroke-width="1.1"/><path d="M248.9 16.6v8.4M244.7 20.8h8.4" stroke="#6b6b6b" stroke-width="2"/></svg>
<div style="left:1px;top:695px;width:1029px;height:21px;background:#f3f3f3;"></div>
<div style="left:1px;top:695px;width:1029px;height:1px;background:#d6d6d6;"></div>
<div class="t" style="left:9.70px;top:699.7px;font-size:11px;line-height:11px;color:#262626;transform:scaleX(1.0429);">Готово</div>
<svg style="left:70px;top:696px;" width="20" height="20" viewBox="0 0 20 20"><rect x="4.5" y="4.5" width="11" height="11" fill="none" stroke="#333" stroke-width="1.1"/><rect x="8" y="4" width="8" height="2.5" fill="#333"/><path d="M6.5 9.5h8M6.5 12h8" stroke="#333" stroke-width="1" stroke-dasharray="1.5 0.8"/><circle cx="9.5" cy="6" r="2.6" fill="#333"/><circle cx="9.5" cy="6" r="0.9" fill="#fff"/></svg>
<div class="t" style="left:982.70px;top:699px;font-size:12px;line-height:12px;color:#262626;transform:scaleX(0.8528);">100 %</div>
<div style="left:619px;top:676px;width:2px;height:2px;background:#8a8a8a;"></div>
<div style="left:619px;top:680px;width:2px;height:2px;background:#8a8a8a;"></div>
<div style="left:619px;top:684px;width:2px;height:2px;background:#8a8a8a;"></div>
<div style="left:636px;top:674px;width:15px;height:15px;background:#fff;border:1px solid #ababab;box-sizing:border-box;"></div>
<div style="left:650px;top:674px;width:306px;height:15px;background:#fff;border:1px solid #ababab;box-sizing:border-box;"></div>
<div style="left:956px;top:675px;width:39px;height:13px;background:repeating-conic-gradient(#b6b6b6 0 25%, #e8e8e8 0 50%) 0 0/2px 2px;"></div>
<div style="left:995px;top:674px;width:15px;height:15px;background:#fff;border:1px solid #ababab;box-sizing:border-box;"></div>
<svg style="left:630px;top:670px;" width="390" height="24" viewBox="0 0 390 24"><polygon points="10.7,11 15,7.8 15,14.8" fill="#6b6b6b"/><polygon points="373.3,7.8 377.5,11.3 373.3,14.8" fill="#6b6b6b"/></svg>
<div style="left:731px;top:695px;width:38px;height:21px;background:repeating-conic-gradient(#b6b6b6 0 25%, #e8e8e8 0 50%) 0 0/2px 2px;"></div>
<svg style="left:725px;top:695px;" width="310" height="22" viewBox="0 0 310 22"><path d="M18.7 4.7h12v12h-12zM22.7 4.7v12M26.7 4.7v12M18.7 8.7h12M18.7 12.7h12" fill="none" stroke="#6b6b6b" stroke-width="1.4"/><rect x="56.8" y="4.6" width="12.8" height="11.9" fill="none" stroke="#6b6b6b" stroke-width="1.1"/><rect x="59.9" y="7" width="6.8" height="7.5" fill="none" stroke="#6b6b6b" stroke-width="1.1"/><path d="M61.2 8.5h4.2M61.2 10.5h4.2M61.2 12.5h4.2" stroke="#6b6b6b" stroke-width="1"/><path d="M94.6 4.6h12.6v11.9h-12.6zM94.6 11.2h8M98.4 4.6v6.6M102.5 4.6v6.6" fill="none" stroke="#6b6b6b" stroke-width="1.1"/><path d="M124.9 11.3h6" stroke="#6b6b6b" stroke-width="2"/><path d="M135.3 11.4h99.5" stroke="#a0a0a0" stroke-width="1"/><rect x="183" y="4.8" width="5.2" height="11" fill="#777"/><path d="M238.4 10.9h7.1M241.95 7.2v7.4" stroke="#6b6b6b" stroke-width="2"/></svg>
<div style="left:305px;top:168px;width:1px;height:26px;background:#d6d6d6;"></div>
<div style="left:301px;top:162px;width:85px;height:41px;background:transparent;border:3px solid #ff0000;box-sizing:border-box;border-radius:9px"></div>
<div style="left:294px;top:261.5px;width:115px;height:33.5px;background:transparent;border:3px solid #ff0000;box-sizing:border-box;border-radius:8px"></div>
<div style="left:485px;top:262px;width:99px;height:31px;background:transparent;border:3px solid #ff0000;box-sizing:border-box;border-radius:8px"></div>
<div style="left:0px;top:0px;width:1px;height:718px;background:#03753f;"></div>
<div style="left:1030px;top:0px;width:2px;height:718px;background:#03753f;"></div>
<div style="left:0px;top:716px;width:1032px;height:2px;background:#03753f;"></div>
</body></html>
